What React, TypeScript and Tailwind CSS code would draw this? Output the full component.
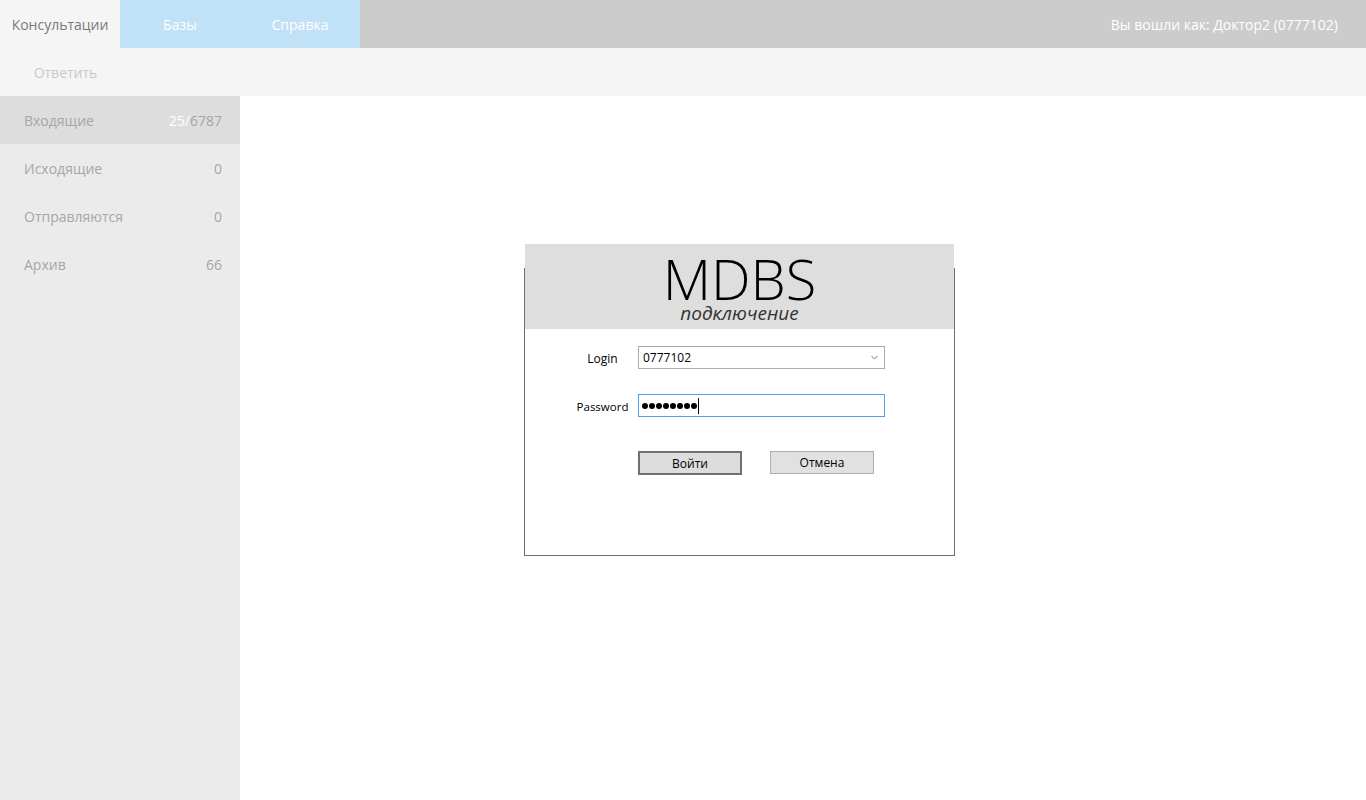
import { useState } from 'react';

const font = { fontFamily: '"Segoe UI", "Open Sans", "Noto Sans", sans-serif' };

const folders = [
  { name: 'Входящие', unread: '25', total: '6787' },
  { name: 'Исходящие', total: '0' },
  { name: 'Отправляются', total: '0' },
  { name: 'Архив', total: '66' },
];

const App = () => {
  const [selected, setSelected] = useState(0);

  return (
    <div className="min-h-screen w-full flex flex-col bg-white text-[14px]" style={font}>
      {/* Top menu */}
      <div className="flex h-[48px] bg-[#cccccc]">
        <div className="w-[120px] bg-[#f5f5f5] text-[#7a7a7a] flex items-center justify-center">Консультации</div>
        <div className="w-[120px] bg-[#c1e1f6] text-white flex items-center justify-center">Базы</div>
        <div className="w-[120px] bg-[#c1e1f6] text-white flex items-center justify-center">Справка</div>
        <div className="flex-1 flex items-center justify-end pr-[28px] text-white">
          Вы вошли как: Доктор2 (0777102)
        </div>
      </div>

      {/* Toolbar */}
      <div className="flex h-[48px] bg-[#f5f5f5]">
        <div className="w-[131px] flex items-center justify-center text-[#c9c9c9]">Ответить</div>
      </div>

      <div className="flex flex-1 h-[704px]">
        {/* Sidebar */}
        <div className="w-[240px] bg-[#ebebeb] flex flex-col">
          {folders.map((f, i) => (
            <div
              key={f.name}
              onClick={() => setSelected(i)}
              className={
                'h-[48px] flex items-center justify-between pl-[24px] pr-[18px] text-[#a6a6a6] cursor-pointer ' +
                (selected === i ? 'bg-[#dddddd]' : '')
              }
            >
              <span>{f.name}</span>
              <span>
                {f.unread && <span className="text-white">{f.unread}/</span>}
                {f.total}
              </span>
            </div>
          ))}
        </div>

        {/* Main */}
        <div className="flex-1">
          <div className="ml-[284px] mt-[172px] w-[431px] h-[288px] border border-[#6e6e6e] flex flex-col">
            <div className="-mt-[25px] h-[85px] bg-[#dedede] flex flex-col items-center">
              <div className="text-[56px] leading-[46px] mt-[11px] text-black font-light">MDBS</div>
              <div className="text-[19px] leading-[19px] mt-[3px] italic text-[#333333]">подключение</div>
            </div>

            <div className="flex flex-col pl-[42px] pt-[17px] text-[12px] text-black">
              <div className="flex items-center">
                <div className="w-[71px] text-center pt-[3px]">Login</div>
                <div className="w-[247px] h-[23px] border border-[#acacac] bg-white flex items-center justify-between pl-[4px] pr-[6px]">
                  <span>0777102</span>
                  <svg width="7" height="5" viewBox="0 0 7 5">
                    <path d="M0.5 1 L3.5 4 L6.5 1" fill="none" stroke="#7a7a7a" strokeWidth="1" />
                  </svg>
                </div>
              </div>

              <div className="flex items-center mt-[25px]">
                <div className="w-[71px] text-center pt-[3px] text-[11.5px]">Password</div>
                <div className="w-[247px] h-[23px] border border-[#569de5] bg-white flex items-center pl-[3px]">
                  <div className="flex gap-[1px]">
                    {Array.from({ length: 8 }).map((_, i) => (
                      <span key={i} className="w-[6px] h-[6px] rounded-full bg-black" />
                    ))}
                  </div>
                  <span className="w-[1px] h-[16px] bg-black ml-[1px]" />
                </div>
              </div>

              <div className="flex items-start mt-[34px] pl-[71px] gap-[28px]">
                <button className="w-[104px] h-[24px] border-2 border-[#707070] bg-[#dddddd] text-[12px] leading-none pt-[1px]">
                  Войти
                </button>
                <button className="w-[104px] h-[23px] border border-[#adadad] bg-[#e1e1e1] text-[12px] leading-none">
                  Отмена
                </button>
              </div>
            </div>
          </div>
        </div>
      </div>
    </div>
  );
};

export default App;
